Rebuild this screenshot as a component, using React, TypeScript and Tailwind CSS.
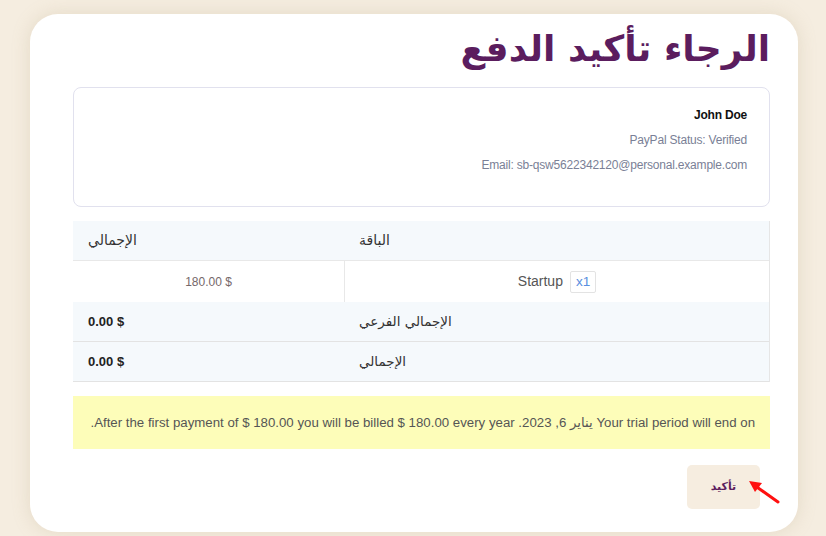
import React from 'react';

interface Row {
  label: string;
  value: string;
}

const summaryRows: Row[] = [
  { label: 'الإجمالي الفرعي', value: '0.00 $' },
  { label: 'الإجمالي', value: '0.00 $' },
];

const arabic = { fontFamily: '"DejaVu Sans", sans-serif' };
const latin = { fontFamily: '"Liberation Sans", "DejaVu Sans", sans-serif' };

const App: React.FC = () => {
  return (
    <div className="min-h-[536px] w-full bg-[#f5ede0] pt-[14px] pl-[30px]" style={latin}>
      <div
        dir="rtl"
        className="relative w-[768px] h-[518px] bg-white rounded-[28px] shadow-[0_0_18px_rgba(180,160,120,0.25)] pr-[28px] pl-[43px] pt-[8px]"
      >
        <h1
          className="text-[36px] leading-[54px] font-bold text-[#5b1d5e] text-right"
          style={arabic}
        >
          الرجاء تأكيد الدفع
        </h1>

        {/* customer box */}
        <div className="mt-[11px] h-[120px] border border-[#e1e1ee] rounded-[8px] px-[22px] pt-[15px]">
          <div className="text-[12px] tracking-[-0.2px] leading-[25px] font-bold text-[#111]">John Doe</div>
          <div className="text-[12px] tracking-[-0.2px] leading-[25px] text-[#7a7f96]">PayPal Status: Verified</div>
          <div className="text-[12px] tracking-[-0.2px] leading-[25px] text-[#7a7f96]">
            Email: sb-qsw5622342120@personal.example.com
          </div>
        </div>

        {/* table */}
        <div className="mt-[14px] border-r border-[#e6e6e6]">
          <div className="flex h-[40px] bg-[#f5f9fc] border-b border-[#e8e8e8] items-center text-[14px] text-[#333] font-medium" style={arabic}>
            <div className="w-[425px] text-left pl-[15px]">الباقة</div>
            <div className="flex-1 text-left pl-[15px]">الإجمالي</div>
          </div>
          <div className="flex h-[41px] bg-white">
            <div className="w-[425px] flex items-center justify-center border-l border-[#e8e8e8] text-[14px] text-[#555]">
              <span dir="ltr" className="flex items-center gap-[7px]">
                <span>Startup</span>
                <span className="border border-[#e3e3e3] rounded-[2px] px-[5px] leading-[20px] text-[13.5px] text-[#5a8fe0]">x1</span>
              </span>
            </div>
            <div className="flex-1 flex items-center justify-center text-[12px] text-[#75686a]">
              <span dir="ltr">180.00 $</span>
            </div>
          </div>
          {summaryRows.map((row) => (
            <div key={row.label} className="flex h-[40px] bg-[#f5f9fc] border-b border-[#e3e3e3] items-center">
              <div className="w-[425px] text-left pl-[15px] text-[13.5px] text-[#333] font-medium" style={arabic}>
                {row.label}
              </div>
              <div className="flex-1 text-left pl-[15px] text-[13px] font-bold text-[#222]">
                <span dir="ltr">{row.value}</span>
              </div>
            </div>
          ))}
        </div>

        {/* trial alert */}
        <div className="mt-[14px] h-[53px] bg-[#fdfdb9] flex items-center px-[15px] text-[13.25px] text-[#555]">
          Your trial period will end on يناير 6, 2023. After the first payment of $ 180.00 you will be billed $ 180.00 every year.
        </div>

        <div className="mt-[16px] flex justify-start pr-[10px]">
          <button
            className="w-[73px] h-[44px] rounded-[5px] bg-[#f6ede0] text-[11px] font-bold text-[#5b1d5e]"
            style={arabic}
          >
            تأكيد
          </button>
        </div>

        {/* annotation arrow */}
        <svg className="absolute left-[712px] top-[462px]" width="40" height="36" viewBox="0 0 40 36">
          <line x1="36" y1="26" x2="12" y2="9" stroke="#ff1010" strokeWidth="3" strokeLinecap="round" />
          <polygon points="7,5 20,7 13,16" fill="#ff1010" />
        </svg>
      </div>
    </div>
  );
};

export default App;
